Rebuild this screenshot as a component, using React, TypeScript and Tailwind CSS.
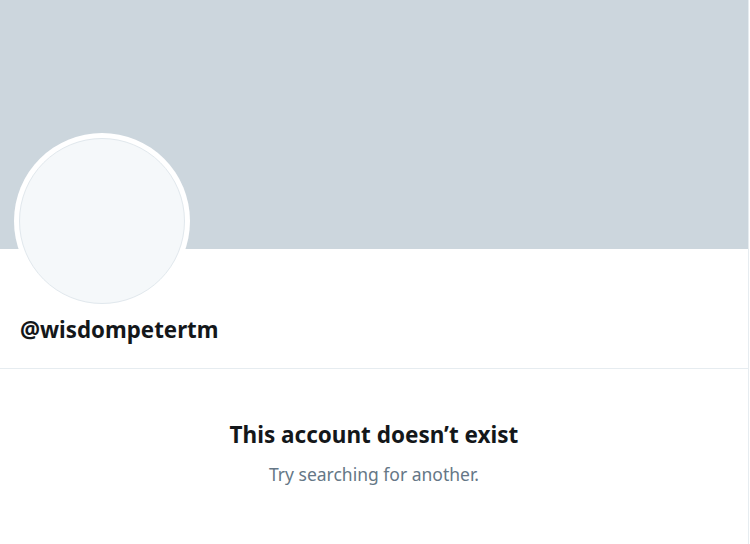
const App: React.FC = () => {
  return (
    <div
      className="flex h-[544px] w-[750px] overflow-hidden bg-white"
      style={{ fontFamily: '"Noto Sans", "Open Sans", sans-serif' }}
    >
      <main className="w-[749px] border-r border-[#e6ecf0]">
        <div className="h-[249px] bg-[#ccd6dd]" />

        <section className="flex h-[120px] flex-col border-b border-[#e6ecf0]">
          <div className="-mt-[116px] ml-[14px] h-[176px] w-[176px] shrink-0 rounded-full bg-white p-[5px]">
            <div className="h-full w-full rounded-full border border-[#e1e8ed] bg-[#f5f8fa]" />
          </div>
          <h2 className="ml-[20px] mt-[7px] text-[22.3px] font-bold leading-[28px] text-[#14171a]">
            @wisdompetertm
          </h2>
        </section>

        <section className="flex flex-col items-center pt-[52px]">
          <h1 className="text-[22.5px] font-bold leading-[28px] text-[#14171a]">
            This account doesn’t exist
          </h1>
          <p className="mt-[14px] text-[17.5px] leading-[22px] text-[#657786]">
            Try searching for another.
          </p>
        </section>
      </main>
    </div>
  );
};

export default App;
